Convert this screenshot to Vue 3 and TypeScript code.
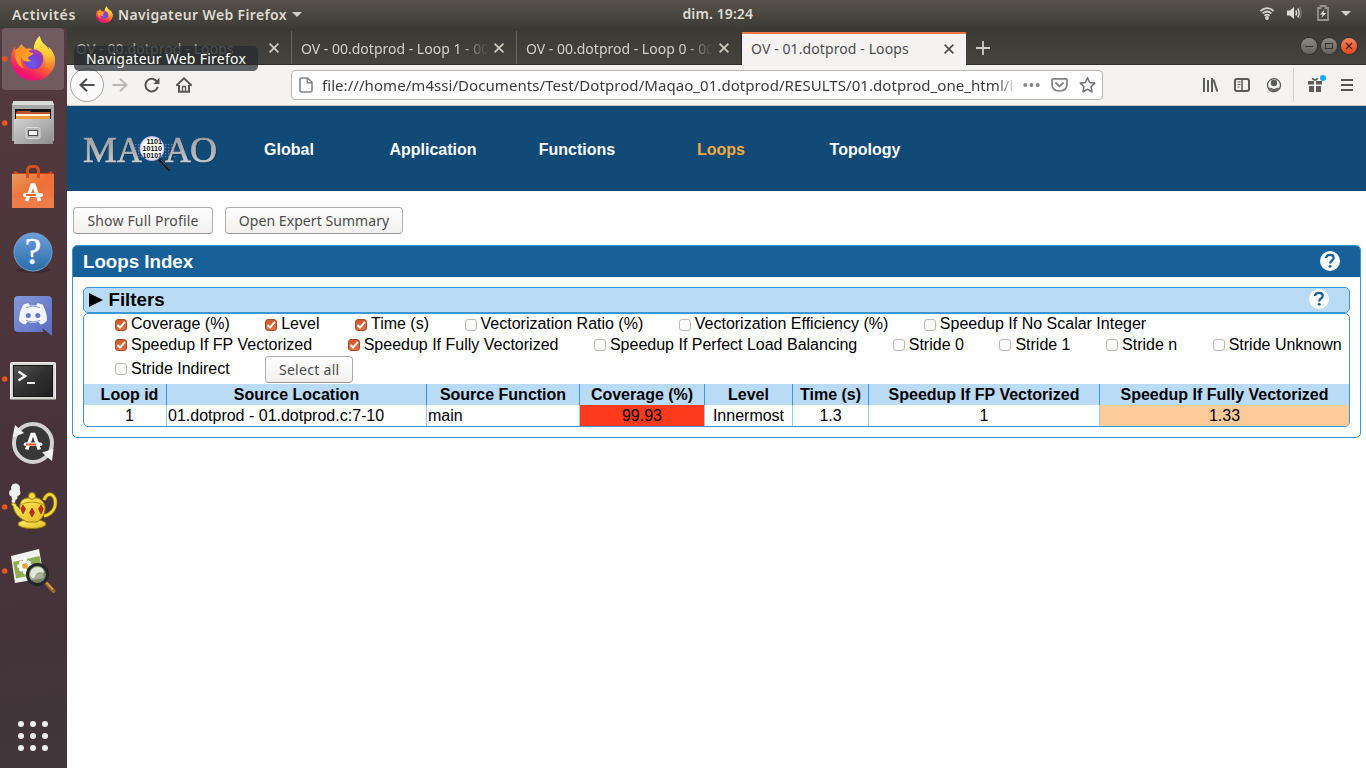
<script setup lang="ts">
interface Tab { title: string; active?: boolean; long?: boolean; cls: string }
interface Filter { label: string; on: boolean }
interface Column { head: string; value: string; cls: string }

const tabs: Tab[] = [
  { title: 'OV - 00.dotprod - Loops', cls: 'dim' },
  { title: 'OV - 00.dotprod - Loop 1 - 00', long: true, cls: '' },
  { title: 'OV - 00.dotprod - Loop 0 - 00', long: true, cls: '' },
  { title: 'OV - 01.dotprod - Loops', active: true, cls: 'active' },
]

const nav = ['Global', 'Application', 'Functions', 'Loops', 'Topology']

const filterRows: Filter[][] = [
  [
    { label: 'Coverage (%)', on: true },
    { label: 'Level', on: true },
    { label: 'Time (s)', on: true },
    { label: 'Vectorization Ratio (%)', on: false },
    { label: 'Vectorization Efficiency (%)', on: false },
    { label: 'Speedup If No Scalar Integer', on: false },
  ],
  [
    { label: 'Speedup If FP Vectorized', on: true },
    { label: 'Speedup If Fully Vectorized', on: true },
    { label: 'Speedup If Perfect Load Balancing', on: false },
    { label: 'Stride 0', on: false },
    { label: 'Stride 1', on: false },
    { label: 'Stride n', on: false },
    { label: 'Stride Unknown', on: false },
  ],
  [{ label: 'Stride Indirect', on: false }],
]

const columns: Column[] = [
  { head: 'Loop id', value: '1', cls: 'first' },
  { head: 'Source Location', value: '01.dotprod - 01.dotprod.c:7-10', cls: 'left' },
  { head: 'Source Function', value: 'main', cls: 'left' },
  { head: 'Coverage (%)', value: '99.93', cls: 'red' },
  { head: 'Level', value: 'Innermost', cls: '' },
  { head: 'Time (s)', value: '1.3', cls: '' },
  { head: 'Speedup If FP Vectorized', value: '1', cls: '' },
  { head: 'Speedup If Fully Vectorized', value: '1.33', cls: 'orange' },
]

const gridDots = [0, 1, 2].flatMap((r) => [0, 1, 2].map((c) => ({ x: 21 + c * 12, y: 4 + r * 12 })))
</script>

<template>
  <div class="screen">
    <svg class="defs" width="0" height="0">
      <defs>
        <linearGradient id="ffBody" x1="0.8" y1="0.05" x2="0.3" y2="1">
          <stop offset="0" stop-color="#fff44f" /><stop offset="0.3" stop-color="#ffb52e" />
          <stop offset="0.6" stop-color="#ff5a36" /><stop offset="0.85" stop-color="#f5156c" /><stop offset="1" stop-color="#e31587" />
        </linearGradient>
        <linearGradient id="ffTail" x1="0.5" y1="0" x2="0.6" y2="1">
          <stop offset="0" stop-color="#fff24f" /><stop offset="0.6" stop-color="#ffc233" /><stop offset="1" stop-color="#ff7a2e" />
        </linearGradient>
        <radialGradient id="ffGlobe" cx="0.4" cy="0.7" r="0.7">
          <stop offset="0" stop-color="#6a5cf5" /><stop offset="0.6" stop-color="#7b3fd0" /><stop offset="1" stop-color="#a438a8" />
        </radialGradient>
        <linearGradient id="ffHead" x1="0" y1="0" x2="1" y2="1">
          <stop offset="0" stop-color="#ff8a1e" /><stop offset="1" stop-color="#ffb32e" />
        </linearGradient>
        <linearGradient id="metal" x1="0" y1="0" x2="1" y2="1">
          <stop offset="0" stop-color="#d2d2d2" /><stop offset="1" stop-color="#8d8d8d" />
        </linearGradient>
        <linearGradient id="bag" x1="0" y1="0" x2="1" y2="1">
          <stop offset="0" stop-color="#e59a5e" /><stop offset="0.5" stop-color="#ee6f33" /><stop offset="1" stop-color="#ef7b49" />
        </linearGradient>
        <linearGradient id="help" x1="0" y1="0" x2="0" y2="1">
          <stop offset="0" stop-color="#6b9fdb" /><stop offset="1" stop-color="#2a6ca8" />
        </linearGradient>
        <linearGradient id="discord" x1="0" y1="0" x2="1" y2="1">
          <stop offset="0" stop-color="#8797da" /><stop offset="1" stop-color="#586dc0" />
        </linearGradient>
        <linearGradient id="term" x1="0" y1="0" x2="1" y2="1">
          <stop offset="0" stop-color="#555" /><stop offset="0.5" stop-color="#303030" /><stop offset="1" stop-color="#1f1f1f" />
        </linearGradient>
        <linearGradient id="gold" x1="0" y1="0" x2="1" y2="1">
          <stop offset="0" stop-color="#fff06a" /><stop offset="1" stop-color="#e2ba1c" />
        </linearGradient>
        <linearGradient id="silver" x1="0" y1="0" x2="0" y2="1">
          <stop offset="0" stop-color="#9a9c9f" /><stop offset="0.55" stop-color="#b0b2b5" /><stop offset="1" stop-color="#dcdddf" />
        </linearGradient>
        <radialGradient id="lens" cx="0.5" cy="0.5" r="0.5">
          <stop offset="0.65" stop-color="#fff" /><stop offset="0.85" stop-color="#e4f3fb" /><stop offset="1" stop-color="#b5a5e8" />
        </radialGradient>
        <clipPath id="lensClip"><circle cx="152" cy="148.500" r="12" /></clipPath>
        <pattern id="bits" width="3" height="3" patternUnits="userSpaceOnUse"><rect width="1.3" height="1.3" fill="#7f93ab" /></pattern>
        <symbol id="firefox" viewBox="0 0 46 46">
          <path d="M11 9c1.200 2 2.500 3.500 4.500 4.500c3-.6 6 .2 8 1c0-6 2.500-11 6-14c.3 4 2 6.500 5.500 9.500c1.700 1.500 2.800 3 3.600 4.500c0-1 0-2-.2-2.700C43 16 45.500 22 45 27C44 38 35 46 23 46C10 46 0 36.500 0 24C0 19 1.800 14.500 4 11.500L4.500 15C6 13.500 6.800 13 8 12.500C8.500 11 9.500 10 11 9Z" fill="url(#ffBody)" />
          <path d="M23.500 15C23 9 26 3.500 29.500.5C30 4.500 31.500 7 35 10C37 11.800 38.200 13.500 38.800 15C38.900 14 38.900 13 38.600 12C43 16 45.500 22 45 27C43 34 38 35 35 32C38 23 31 15 23.500 15Z" fill="url(#ffTail)" />
          <circle cx="23" cy="24.500" r="10" fill="url(#ffGlobe)" />
          <path d="M4.500 15C6.500 12.500 10 12.500 15.500 14C17.500 15.500 19 17.500 23 18C22.500 20.500 19 21 17.500 22C17 23.500 18 25 20.500 25.500C16.500 28.500 11 25.500 11 22C9 25 10.500 31 14 34C7 32 3 24 4.500 15Z" fill="url(#ffHead)" />
          <path d="M21 13.800C27 13.500 32 17 33.500 22C31 19.500 28.500 19 27 19C24 17 22.500 15.500 19.500 15.500Z" fill="#b43faf" opacity=".8" />
        </symbol>
      </defs>
    </svg>

    <header class="topbar">
      <div class="side">
        <span class="u b activities">Activités</span>
        <svg class="ffsmall" width="17" height="17"><use href="#firefox" /></svg>
        <span class="u b appname">Navigateur Web Firefox</span>
        <svg width="10" height="5" viewBox="0 0 10 5"><path d="M0 0H10L5 5Z" fill="#d3d0ca" /></svg>
      </div>
      <span class="u b clock">dim. 19:24</span>
      <div class="side right">
        <svg width="106" height="28" viewBox="1260 0 106 28">
          <g fill="none" stroke="#d6d4d0" stroke-width="1.700">
            <path d="M1260.500 11Q1267 5.200 1273.500 11" /><path d="M1262.600 13.400Q1267 9.600 1271.400 13.400" /><path d="M1264.400 15.800Q1267 13.600 1269.600 15.800" />
          </g>
          <circle cx="1267" cy="18" r="1.900" fill="#d6d4d0" />
          <path d="M1287 10.500H1290L1294 7V19L1290 15.500H1287Z" fill="#dedcd8" />
          <path d="M1295.800 10.500Q1297.500 13 1295.800 15.500M1297.800 8.500Q1300.500 13 1297.800 17.500" fill="none" stroke="#d6d4d0" stroke-width="1.500" />
          <path d="M1299.600 7Q1303 13 1299.600 19" fill="none" stroke="#77746d" stroke-width="1.300" />
          <path d="M1318 8H1320.500V6H1325.500V8H1328V20H1318Z" fill="none" stroke="#96938d" stroke-width="1.800" />
          <path d="M1324.500 9.500L1320 14.500H1322.700L1321.200 18L1326.300 13H1323.400Z" fill="#e2e0dc" />
          <path d="M1341 11H1351L1346 16Z" fill="#d3d0ca" />
        </svg>
      </div>
    </header>

    <div class="body">
      <aside class="dock">
        <div class="app current">
          <svg viewBox="0 0 67 64"><circle cx="4.700" cy="32" r="2.800" fill="#e95420" /><use href="#firefox" x="11" y="8" width="45" height="46" /></svg>
        </div>
        <div class="app">
          <svg viewBox="0 0 67 64">
            <circle cx="4.700" cy="32" r="2.800" fill="#e95420" />
            <path d="M13.500 10H52.500L54 14V50H12V14Z" fill="#a8a8a8" /><path d="M13.500 10H52.500L54 14H12Z" fill="#dadada" />
            <rect x="15" y="18" width="36" height="12" fill="#151515" />
            <path d="M16 22Q16 20 18 20H30L31 21H50V28H16Z" fill="#b9542a" /><rect x="16" y="23" width="34" height="2" fill="#fff1e0" /><rect x="16" y="25" width="34" height="4" fill="#ef9a3f" />
            <path d="M14 28H52L53 29V53H14Z" fill="url(#metal)" />
            <rect x="26" y="36.500" width="14" height="11" rx="1.500" fill="#b7b7b7" stroke="#dcdcdc" /><rect x="28.500" y="39.500" width="9" height="5" fill="#f3f3f3" stroke="#4b4b4b" />
          </svg>
        </div>
        <div class="app">
          <svg viewBox="0 0 67 64">
            <path d="M12 19L15 16L19 18H48L51 16L54 19V25H12Z" fill="#c94819" />
            <rect x="12" y="19" width="42" height="34" fill="url(#bag)" /><rect x="12" y="43" width="42" height="10" fill="#ef8050" opacity=".7" />
            <path d="M27.500 23V15Q28 11.500 31.500 11.500H34.500Q38 11.500 38.500 15V23" fill="none" stroke="#d4511f" stroke-width="3" />
            <path d="M26.500 46L32.200 30H33.800L39.500 46" fill="none" stroke="#fff" stroke-width="3.700" /><path d="M25 40H41" stroke="#fff" stroke-width="4" stroke-linecap="round" /><path d="M26 40H36" stroke="#ec6b2f" stroke-width="2" />
          </svg>
        </div>
        <div class="app">
          <svg viewBox="0 0 67 64"><ellipse cx="33" cy="51" rx="17" ry="3" fill="#302025" opacity=".5" /><circle cx="33" cy="33" r="19" fill="url(#help)" stroke="#72a6d3" /><text x="33" y="45" text-anchor="middle" class="helpmark">?</text></svg>
        </div>
        <div class="app">
          <svg viewBox="0 0 67 64">
            <path d="M18 13H48Q52 13 52 17V53L42 45L43.500 49H18Q14 49 14 45V17Q14 13 18 13Z" fill="url(#discord)" />
            <path d="M23.500 21.500L28.500 20L30 22.500Q33 22 36 22.500L37.500 20L42.500 21.500Q47 29 47 37.500Q44.500 41 40.500 41.500L38.500 38.800Q33 40.500 27.500 38.800L25.500 41.500Q21.500 41 19 37.500Q19 29 23.500 21.500Z" fill="#f4f5fc" />
            <circle cx="28.300" cy="32.500" r="2.500" fill="#6579c9" /><circle cx="37.800" cy="32.500" r="2.500" fill="#6579c9" /><path d="M26 24.500Q33 21.500 40 24.500M26 37.500Q33 40.500 40 37.500" stroke="#8998d7" fill="none" />
          </svg>
        </div>
        <div class="app">
          <svg viewBox="0 0 67 64">
            <circle cx="4.700" cy="32" r="2.800" fill="#e95420" />
            <rect x="10.500" y="15.500" width="45" height="37" rx="1" fill="#d6d6d3" stroke="#f0f0ee" /><path d="M11 52.500H55" stroke="#8b8b88" />
            <rect x="13.500" y="18.500" width="39" height="31" fill="url(#term)" stroke="#161616" />
            <path d="M18.500 24.500L25 29L18.500 33.500" stroke="#eee" stroke-width="2.600" fill="none" /><path d="M27 36H35" stroke="#eee" stroke-width="2" />
          </svg>
        </div>
        <div class="app">
          <svg viewBox="0 0 67 64">
            <circle cx="33" cy="32" r="17" fill="#383838" /><circle cx="33" cy="32" r="19" fill="none" stroke="#d3d3d3" stroke-width="4" />
            <path d="M12.500 26.500L15 14L24 22Z" fill="#f2f2f2" /><path d="M53.500 38L52 50L42 41.500Z" fill="#f2f2f2" />
            <path d="M26.700 38.500L32 23.500H34L39.300 38.500" fill="none" stroke="#fff" stroke-width="3.500" /><path d="M25.500 33.300H40.500" stroke="#fff" stroke-width="3.600" stroke-linecap="round" /><path d="M26 33.500H36" stroke="#e95420" stroke-width="2" />
          </svg>
        </div>
        <div class="app">
          <svg viewBox="0 0 67 64">
            <circle cx="4.700" cy="32" r="2.800" fill="#e95420" />
            <path d="M44 25Q47 17.500 52 20Q56.500 23 55 31Q53 39 44 41" fill="none" stroke="#9a7a0a" stroke-width="4" /><path d="M44 25Q47 17.500 52 20Q56.500 23 55 31Q53 39 44 41" fill="none" stroke="#f4d936" stroke-width="2.500" />
            <ellipse cx="32" cy="49" rx="14" ry="4.500" fill="url(#gold)" stroke="#9a7a0a" />
            <path d="M11 29Q15 26 17 31L20 34Q19 25 25 23.500Q32 21 39 23.500Q46 27 45 35Q44 43 37 47H27Q21 44 17 40Q14 36 13 31Z" fill="url(#gold)" stroke="#9a7a0a" />
            <circle cx="32" cy="21" r="3.400" fill="#f9df3e" stroke="#9a7a0a" /><path d="M20 30Q32 24 44 30" fill="none" stroke="#b99512" />
            <path d="M23 30L25.500 34L23 39L20.800 34ZM32 33L34.500 37.500L32 42L29.500 37.500ZM41 30L43.200 34L41 39L38.500 34Z" fill="#c42b20" stroke="#831610" stroke-width=".6" />
            <g fill="#efefef"><circle cx="15.500" cy="13" r="4.500" /><circle cx="12.500" cy="18" r="3.400" /><circle cx="17" cy="17.500" r="3.400" /><circle cx="14.500" cy="22" r="3" /><circle cx="13.500" cy="26" r="2" /></g>
          </svg>
        </div>
        <div class="app">
          <svg viewBox="0 0 67 64">
            <circle cx="4.700" cy="32" r="2.800" fill="#e95420" />
            <path d="M11 17L39 10L44 39L15 44Z" fill="#f2f2ec" /><path d="M13 23L39.500 17L43 34L16 39.500Z" fill="#8fae52" />
            <g fill="#fff"><ellipse cx="25" cy="22" rx="2" ry="3.500" /><ellipse cx="25" cy="32" rx="2" ry="3.500" /><ellipse cx="20.500" cy="27" rx="3.500" ry="2" /><ellipse cx="30" cy="27" rx="3.500" ry="2" /><ellipse cx="21.500" cy="23.500" rx="2.500" ry="2" /><ellipse cx="28.500" cy="23.500" rx="2.500" ry="2" /><ellipse cx="21.500" cy="30.500" rx="2.500" ry="2" /></g>
            <circle cx="25" cy="27" r="2.700" fill="#eaa02c" />
            <path d="M46 44L53.500 52" stroke="#9b6429" stroke-width="4" stroke-linecap="round" /><path d="M46.500 43.500L53 50.500" stroke="#dca04d" stroke-width="1.500" />
            <circle cx="37.500" cy="35.500" r="10" fill="#8c9a78" fill-opacity=".75" stroke="#232729" stroke-width="3" />
            <path d="M30 35Q31 28 38 28Q44 29 44 34Q37 31 34 39Q31 39 30 35Z" fill="#fff" opacity=".75" />
          </svg>
        </div>
        <svg class="appgrid" width="67" height="32" viewBox="0 0 67 32"><circle v-for="(d, i) in gridDots" :key="i" :cx="d.x" :cy="d.y" r="3" fill="#eeeeec" /></svg>
      </aside>

      <main class="browser">
        <div class="tabs">
          <div v-for="tab in tabs" :key="tab.title" class="tab" :class="tab.cls">
            <span class="u tabtitle" :class="{ fade: tab.long }">{{ tab.title }}</span>
            <svg class="close" width="10" height="10" viewBox="0 0 10 10"><path d="M.6 .6L9.400 9.400M9.400 .6L.6 9.400" stroke="currentColor" stroke-width="1.600" /></svg>
          </div>
          <svg class="plus" width="14" height="14" viewBox="0 0 14 14"><path d="M7 0V14M0 7H14" stroke="#d2cfc8" stroke-width="1.800" /></svg>
          <div class="winbtns">
            <span class="win"><svg viewBox="0 0 16 16"><path d="M4 8.500H12" stroke="#33312d" /></svg></span>
            <span class="win"><svg viewBox="0 0 16 16"><rect x="4.500" y="5.500" width="7" height="5" fill="none" stroke="#33312d" /></svg></span>
            <span class="win red"><svg viewBox="0 0 16 16"><path d="M5 5L11 11M11 5L5 11" stroke="#48200f" stroke-width="1.200" /></svg></span>
          </div>
        </div>

        <div class="toolbar">
          <span class="back"><svg width="16" height="16" viewBox="0 0 16 16"><path d="M15.500 8H2M8 1.700L1.500 8L8 14.300" fill="none" stroke="#4f4f4d" stroke-width="2" /></svg></span>
          <svg class="fwd" width="16" height="16" viewBox="0 0 16 16"><path d="M.5 8H14M8 1.700L14.500 8L8 14.300" fill="none" stroke="#bab9b7" stroke-width="2" /></svg>
          <svg class="reload" width="16" height="16" viewBox="0 0 16 16"><path d="M13.600 5.800A6.300 6.300 0 1 0 13.800 9.900" fill="none" stroke="#555553" stroke-width="2" /><path d="M15.500 .8V7H9.300Z" fill="#555553" /></svg>
          <svg class="home" width="16" height="16" viewBox="0 0 16 16"><path d="M.7 8.300L8 1.300L15.300 8.300" fill="none" stroke="#555553" stroke-width="1.900" stroke-linecap="round" /><path d="M3 8V14.800H13V8" fill="none" stroke="#555553" stroke-width="2" /><path d="M6.500 15V9.500H9.500V15" fill="none" stroke="#555553" stroke-width="1.300" /></svg>
          <div class="url">
            <svg class="page" width="14" height="16" viewBox="0 0 14 16"><path d="M2.500 1H8.700L13 5.300V13.500Q13 15 11.500 15H2.500Q1 15 1 13.500V2.500Q1 1 2.500 1ZM8.300 1.500V5.700H12.500" fill="none" stroke="#858583" stroke-width="1.600" /></svg>
            <span class="u address">file:///home/m4ssi/Documents/Test/Dotprod/Maqao_01.dotprod/RESULTS/01.dotprod_one_html/lo</span>
            <svg class="urlicons" width="74" height="18" viewBox="0 0 74 18">
              <g fill="#868684"><circle cx="2.300" cy="9" r="2" /><circle cx="8.500" cy="9" r="2" /><circle cx="14.700" cy="9" r="2" /></g>
              <path d="M29.500 2.800H43Q44 2.800 44 3.800V8Q44 15 36.500 15Q29 15 29 8V3.800Q29 2.800 30 2.800Z" fill="none" stroke="#80807e" stroke-width="1.700" /><path d="M33 7L36.500 10.300L40 7" fill="none" stroke="#80807e" stroke-width="1.800" stroke-linecap="round" />
              <path d="M64.500 1.800L66.700 6.500L71.700 7.100L68 10.600L69 15.700L64.500 13.200L60 15.700L61 10.600L57.300 7.100L62.300 6.500Z" fill="none" stroke="#777775" stroke-width="1.600" stroke-linejoin="round" />
            </svg>
          </div>
          <svg class="tools" width="166" height="40" viewBox="1200 65 166 40">
            <g fill="none" stroke="#5b5b59" stroke-width="2">
              <path d="M1204 78V92M1208 80V92M1212 78V92" /><path d="M1213.500 79.500L1217.300 91.500" />
              <rect x="1235" y="79" width="14" height="12" rx="2" /><path d="M1242 79V91" stroke-width="1.500" /><path d="M1237.500 82H1240.500M1237.500 84.500H1240.500M1237.500 87H1239.500" stroke-width="1.200" />
              <circle cx="1274" cy="85.200" r="6.500" stroke-width="1.300" />
            </g>
            <circle cx="1274" cy="83" r="3.200" fill="#5b5b59" /><path d="M1269.500 88Q1274 91 1278.500 88Q1277 90.800 1274 90.800Q1271 90.800 1269.500 88Z" fill="#5b5b59" stroke="#5b5b59" />
            <path d="M1293.500 68V102" stroke="#d2d0ce" />
            <path d="M1308 81H1314V84.500H1308ZM1316 81H1322V84.500H1316ZM1309 86H1314V92H1309ZM1316 86H1321V92H1316Z" fill="#5b5b59" /><path d="M1312.500 78Q1313 80 1315 80Q1317 80 1317.500 78" fill="none" stroke="#5b5b59" stroke-width="1.800" />
            <circle cx="1323" cy="78" r="3" fill="#12aef5" />
            <path d="M1341 80H1353M1341 85H1353M1341 90H1353" stroke="#555553" stroke-width="2" />
          </svg>
        </div>

        <div class="banner">
          <svg class="logo" width="150" height="85" viewBox="67 106 150 85">
            <rect x="134" y="143" width="42" height="15" fill="url(#bits)" opacity=".75" />
            <g class="maqao" fill="url(#silver)" stroke="url(#silver)" stroke-width=".7">
              <text x="83" y="161.500" textLength="34" lengthAdjust="spacingAndGlyphs">M</text><text x="117" y="161.500" textLength="25" lengthAdjust="spacingAndGlyphs">A</text>
              <text x="165" y="161.500" textLength="26" lengthAdjust="spacingAndGlyphs">A</text><text x="190" y="161.500" textLength="27" lengthAdjust="spacingAndGlyphs">O</text>
            </g>
            <path d="M159 159L170 170.500" stroke="#161616" stroke-width="2.800" /><path d="M161 160L170 169.500" stroke="#808080" stroke-width=".7" />
            <circle cx="152" cy="148.500" r="12.400" fill="url(#lens)" />
            <g class="binary" clip-path="url(#lensClip)"><text x="146.500" y="144.200" textLength="15.500" lengthAdjust="spacingAndGlyphs">1101</text><text x="142.500" y="151.200" textLength="19.500" lengthAdjust="spacingAndGlyphs">10110</text><text x="142.500" y="158.200" textLength="19.500" lengthAdjust="spacingAndGlyphs">10101</text></g>
          </svg>
          <nav class="nav"><a v-for="n in nav" :key="n" :class="{ sel: n === 'Loops' }">{{ n }}</a></nav>
        </div>

        <div class="content">
          <div class="actions">
            <button class="u btn full">Show Full Profile</button>
            <button class="u btn expert">Open Expert Summary</button>
          </div>
          <section class="panel">
            <div class="phead"><h3>Loops Index</h3><span class="q"><svg width="20" height="20" viewBox="0 0 20 20"><circle cx="10" cy="10" r="10" fill="#fff" /><path d="M6 7Q6.300 3.800 10 3.800Q13.700 3.800 13.700 6.800Q13.700 8.300 12 9.500Q10.200 10.700 10.200 12.600" fill="none" stroke="#17609a" stroke-width="2.300" /><circle cx="10.200" cy="15.300" r="1.400" fill="#17609a" /></svg></span></div>
            <div class="fhead"><h3><svg width="14" height="14" viewBox="0 0 14 14"><path d="M0 0L14 7L0 14Z" /></svg>Filters</h3><span class="q"><svg width="20" height="20" viewBox="0 0 20 20"><circle cx="10" cy="10" r="10" fill="#fff" /><path d="M6 7Q6.300 3.800 10 3.800Q13.700 3.800 13.700 6.800Q13.700 8.300 12 9.500Q10.200 10.700 10.200 12.600" fill="none" stroke="#17609a" stroke-width="2.300" /><circle cx="10.200" cy="15.300" r="1.400" fill="#17609a" /></svg></span></div>
            <div class="box">
              <div v-for="(row, r) in filterRows" :key="r" class="frow" :class="'r' + r">
                <label v-for="f in row" :key="f.label" class="filter">
                  <span class="cb" :class="{ on: f.on }"><svg v-if="f.on" viewBox="0 0 12 12"><path d="M2.500 6L5 8.600L10 2.800" fill="none" stroke="#fff" stroke-width="2" /></svg></span>{{ f.label }}
                </label>
                <button v-if="r === 2" class="u btn all">Select all</button>
              </div>
              <div class="grid">
                <div v-for="c in columns" :key="c.head" class="th" :class="c.cls">{{ c.head }}</div>
                <div v-for="c in columns" :key="c.head + 'v'" class="td" :class="c.cls">{{ c.value }}</div>
              </div>
            </div>
          </section>
        </div>
      </main>
    </div>
    <div class="tooltip u">Navigateur Web Firefox</div>
  </div>
</template>

<style>
body { margin: 0; overflow: hidden; }
</style>

<style scoped>
.screen { position: relative; width: 1366px; height: 768px; overflow: hidden; background: #fff; display: flex; flex-direction: column; font: 16px "Liberation Sans", Arial, sans-serif; }
.screen * { box-sizing: border-box; }
.defs { position: absolute; }
svg { display: block; flex: none; }
.u { font-family: "Noto Sans", "Open Sans", sans-serif; font-size: 14px; white-space: nowrap; }
.b { font-weight: 600; color: #dfdbd2; font-size: 14px; }
.topbar { height: 28px; flex: none; display: grid; grid-template-columns: 1fr 71px 1fr; align-items: center; background: linear-gradient(#57534b, #3d3b36); }
.side { display: flex; align-items: center; }
.right { justify-content: flex-end; }
.activities { margin-left: 12px; width: 64px; letter-spacing: .6px; }
.ffsmall { margin: 0 5px 0 20px; }
.appname { width: 174px; letter-spacing: .37px; }
.clock { position: relative; left: 35px; margin-top: -2px; letter-spacing: .1px; }
.body { display: flex; flex: 1; min-height: 0; }
.dock { width: 67px; flex: none; background: linear-gradient(172deg, #533a40, #4a333a 50%, #44343a 80%, #41363a); display: flex; flex-direction: column; }
.app { height: 64px; flex: none; }
.app svg { width: 67px; height: 64px; margin-top: -1px; }
.current { width: 62px; height: 62px; margin: 0 0 2px 2px; border-radius: 4px; background: #725b60; }
.current svg { margin-left: -2px; }
.helpmark { font: 37px "Liberation Serif", serif; fill: #fff; stroke: #fff; stroke-width: .5px; }
.appgrid { margin-top: auto; margin-bottom: 16px; }
.browser { flex: 1; min-width: 0; display: flex; flex-direction: column; }
.tabs { height: 37px; flex: none; background: linear-gradient(#3b3934, #45433d); border-bottom: 1px solid #33312d; display: flex; align-items: center; }
.tab { width: 225px; height: 33px; align-self: flex-end; border-right: 1px solid #6b6963; display: flex; align-items: center; padding: 1px 12px 0 9px; color: #d4d0c8; justify-content: space-between; }
.tab:nth-child(3) { border-right-color: #2b2926; }
.tab.active { background: #f4f3f2; color: #4d4d4d; border-top: 2px solid #f07746; border-right: 0; width: 224px; height: 33px; margin-bottom: -1px; padding: 0 12px 2px 9px; }
.tab.dim .tabtitle { color: #b5b2ab; }
.tabtitle { letter-spacing: .1px; }
.fade { width: 187px; letter-spacing: 0; mask-image: linear-gradient(90deg, #000 85%, transparent); }
.plus { margin-left: 10px; margin-top: 4px; }
.winbtns { margin-left: auto; margin-right: 9px; display: flex; gap: 4px; }
.win { width: 16px; height: 16px; border-radius: 50%; background: linear-gradient(#8b8981, #65635b); box-shadow: 0 0 0 1px #33312d; }
.win.red { background: linear-gradient(#f5835f, #de4a1b); }
.toolbar { height: 41px; flex: none; background: #f4f3f2; border-bottom: 1px solid #c9c4c0; display: flex; align-items: center; }
.back { width: 34px; height: 34px; border: 1px solid #a9a6a3; border-radius: 50%; background: #fbfafa; display: flex; align-items: center; justify-content: center; margin-left: 3px; }
.fwd { margin-left: 8px; }
.reload { margin-left: 16px; }
.home { margin-left: 16px; }
.url { width: 812px; height: 30px; margin-left: 99px; border: 1px solid #bdb8b4; border-radius: 4px; background: #fff; display: flex; align-items: center; padding-left: 7px; }
.address { margin-left: 9px; width: 692px; overflow: hidden; color: #3c3c3c; font-size: 15px; letter-spacing: .06px; mask-image: linear-gradient(90deg, #000 97.500%, transparent 100.500%); }
.urlicons { margin-left: 9px; }
.tools { margin-left: auto; }
.banner { height: 85px; flex: none; background: #124a77; display: flex; align-items: center; }
.maqao { font: 36px "Liberation Serif", serif; filter: drop-shadow(1px 1px 0 #183a59); }
.binary { font: bold 8px "Liberation Sans", sans-serif; fill: #111; }
.nav { display: grid; grid-template-columns: repeat(5, 144px); text-align: center; color: #fff; font-weight: bold; padding-top: 3px; }
.sel { color: #f2a93b; }
.content { padding: 16px 5px 0; }
.actions { display: flex; gap: 12px; padding-left: 1px; }
.btn { height: 27px; padding: 0; color: #4c4c4c; border: 1px solid #b0adaa; border-bottom-color: #9a9794; border-radius: 4px; background: linear-gradient(#fff, #f1f0ef); line-height: 25px; letter-spacing: .17px; }
.full { width: 140px; }
.expert { width: 178px; letter-spacing: .07px; }
.all { width: 88px; padding-left: 1px; letter-spacing: .3px; }
.panel { margin-top: 11px; border: 1px solid #3d96d6; border-radius: 5px; height: 193px; width: 1289px; padding-bottom: 10px; }
.phead { height: 31px; background: #17609a; border-radius: 4px 4px 0 0; color: #fff; display: flex; justify-content: space-between; align-items: center; padding: 0 20px 0 10px; }
.phead .q { margin-top: -1px; }
h3 { margin: 0; font-size: 18.720px; line-height: 24px; display: flex; align-items: center; gap: 5.500px; }
.fhead { margin: 10px 10px 0; height: 26px; border: 1px solid #3d96d6; border-radius: 5px; background: #badbf5; display: flex; justify-content: space-between; align-items: center; padding: 0 20px 0 5px; }
.fhead .q { margin-top: -3px; }
.box { margin: 0 10px; height: 114px; border: 1px solid #3d96d6; border-radius: 5px; overflow: hidden; display: flex; flex-direction: column; }
.frow { height: 20px; display: flex; align-items: center; gap: 35.500px; padding-left: 31px; flex: none; white-space: nowrap; line-height: 18px; }
.r1 .filter { margin-top: 2px; }
.r2 { height: 30px; padding-top: 1px; gap: 35px; }
.r2 .filter { margin-top: -1px; }
.filter { display: flex; align-items: center; }
.cb { width: 12px; height: 12px; margin: 2px 4px 0 0; border: 1px solid #bdb9b5; border-radius: 3px; background: #fbfbfa; }
.r1 .cb, .r2 .cb { margin-top: 0; }
.cb.on { background: linear-gradient(#d05a2c, #dd7047); border-color: #ad4a25; }
.cb svg { width: 12px; height: 12px; margin: -1px; overflow: visible; }
.grid { display: grid; grid-template-columns: 83px 260px 153px 125px 88px 76px 231px 250px; grid-template-rows: 21px 21px; text-align: center; line-height: 21px; white-space: nowrap; }
.th { background: #badbf5; font-weight: bold; border-right: 1px solid #3d96d6; }
.td { border-right: 1px solid #9bcbed; }
.th:nth-child(8), .td:last-child { border-right: 0; padding-right: 1px; }
.first { padding-left: 9px; }
.td.left { text-align: left; padding-left: 1px; }
.td.red { background: #fd3a1b; }
.td.orange { background: #fdcb99; }
.tooltip { position: absolute; left: 74px; top: 46px; width: 184px; height: 25px; border-radius: 5px; background: rgba(37, 42, 45, .72); color: #fff; padding-left: 12px; line-height: 25px; letter-spacing: .27px; }
</style>
